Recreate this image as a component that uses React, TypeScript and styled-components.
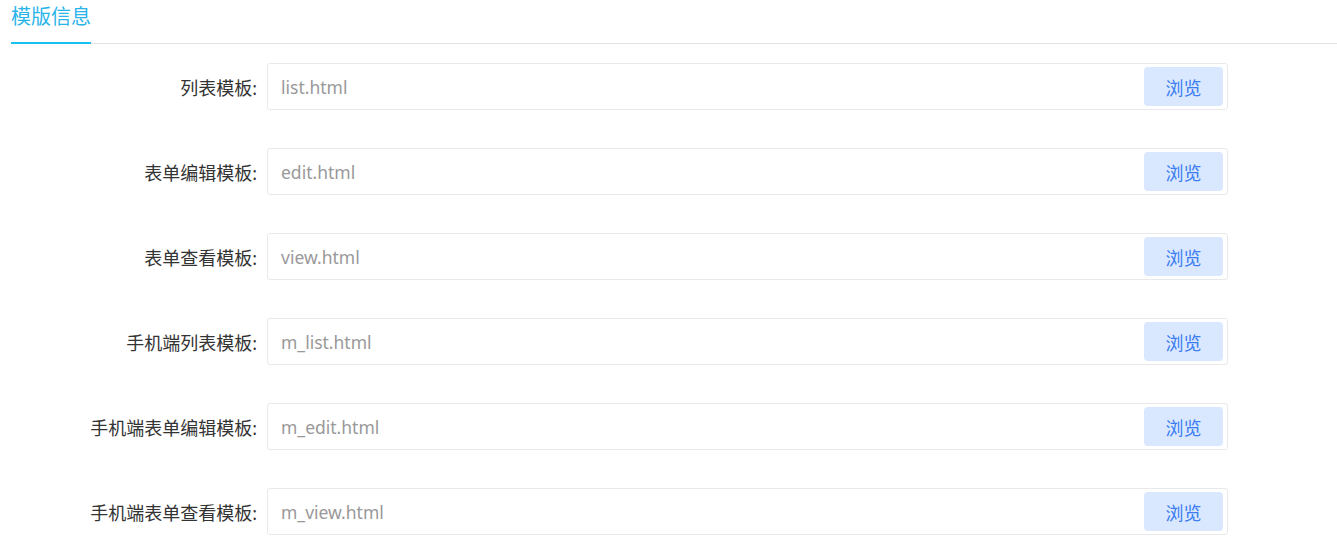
import React, { FC } from 'react'
import styled, { createGlobalStyle } from 'styled-components'

const GlobalStyle = createGlobalStyle`
body {
  margin: 0;
  background: #fff;
  font-family: "Noto Sans", "Noto Sans CJK SC", sans-serif;
}
`

const Page = styled.div`
display: flex;
flex-direction: column;
width: 100%;
`

const TabBar = styled.div`
display: flex;
margin-left: 11px;
border-bottom: 1px solid #e2e2e2;
`

const Tab = styled.div`
font-size: 20px;
line-height: 33px;
padding-bottom: 9px;
color: #2bb4ea;
border-bottom: 2px solid #17c1ee;
margin-bottom: -1px;
`

const Form = styled.div`
display: flex;
flex-direction: column;
gap: 38px;
padding-top: 19px;
`

const Row = styled.div`
display: grid;
grid-template-columns: 257px 961px;
column-gap: 10px;
align-items: center;
`

const Label = styled.div`
text-align: right;
font-size: 18px;
color: #333;
`

const Field = styled.div`
display: flex;
align-items: center;
height: 47px;
box-sizing: border-box;
border: 1px solid #e9e9e9;
border-radius: 3px;
padding: 3px 4px 3px 13px;
`

const Value = styled.input`
flex: 1;
border: none;
outline: none;
background: transparent;
font-family: inherit;
font-size: 17.5px;
color: #999;
padding: 0;
`

const Browse = styled.button`
width: 79px;
height: 39px;
border: none;
border-radius: 4px;
background: #d9e8fe;
color: #3b7cf0;
font-family: inherit;
font-size: 18px;
cursor: pointer;
`

const templates = [
  { label: '列表模板:', file: 'list.html' },
  { label: '表单编辑模板:', file: 'edit.html' },
  { label: '表单查看模板:', file: 'view.html' },
  { label: '手机端列表模板:', file: 'm_list.html' },
  { label: '手机端表单编辑模板:', file: 'm_edit.html' },
  { label: '手机端表单查看模板:', file: 'm_view.html' },
]

const App: FC = () => {
  return (
    <Page>
      <GlobalStyle />
      <TabBar>
        <Tab>模版信息</Tab>
      </TabBar>
      <Form>
        {templates.map((t) => (
          <Row key={t.file}>
            <Label>{t.label}</Label>
            <Field>
              <Value defaultValue={t.file} readOnly />
              <Browse>浏览</Browse>
            </Field>
          </Row>
        ))}
      </Form>
    </Page>
  )
}

export default App
